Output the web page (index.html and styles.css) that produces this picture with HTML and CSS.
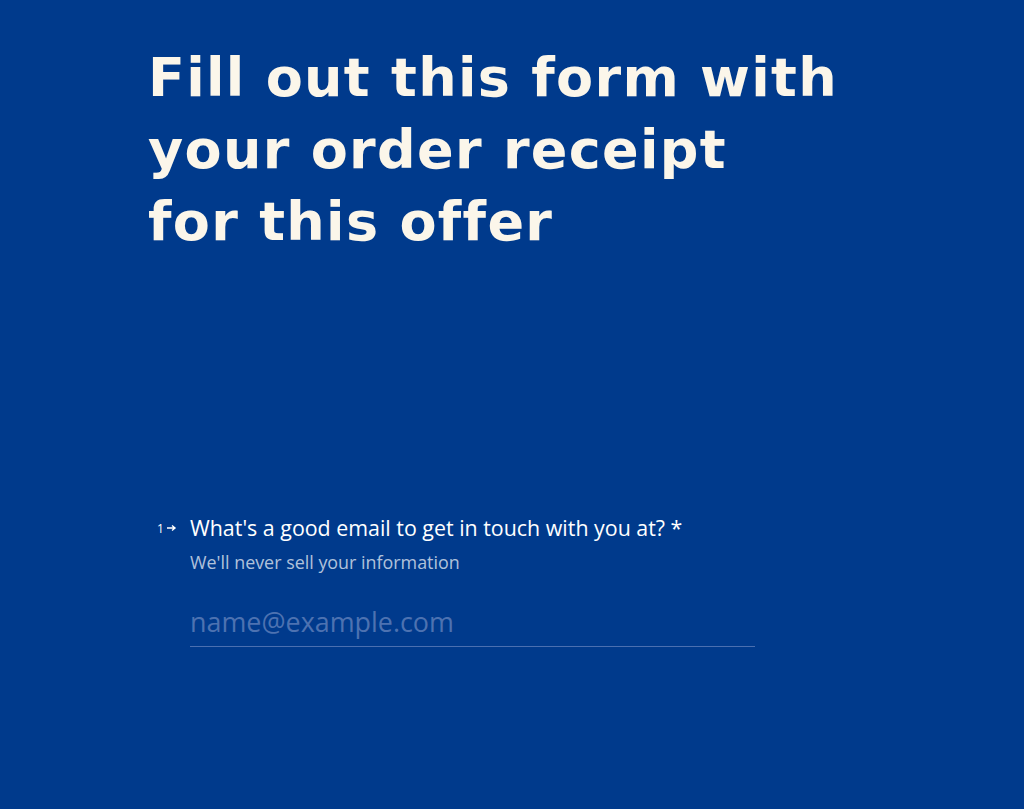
FILE: index.html
```html
<!DOCTYPE html>
<html lang="en">
<head>
<meta charset="utf-8">
<title>Form</title>
<link rel="stylesheet" href="styles.css">
</head>
<body>
<main class="page">
  <h1 class="title">Fill out this form with<br>your order receipt<br>for this offer</h1>
  <section class="question">
    <div class="num">1<svg class="arrow" width="10" height="8" viewBox="0 0 10 8"><path d="M0 4h7M5 1.5L8 4 5 6.5" fill="none" stroke="#fff" stroke-width="1.4"/></svg></div>
    <div class="body">
      <div class="label">What's a good email to get in touch with you at? *</div>
      <div class="hint">We'll never sell your information</div>
      <input class="field" type="text" placeholder="name@example.com">
    </div>
  </section>
</main>
</body>
</html>
```
FILE: styles.css
```css
html, body { margin: 0; padding: 0; }
body {
  background: #003a8c;
  width: 1024px;
  height: 809px;
  overflow: hidden;
  font-family: "Open Sans", sans-serif;
}
.page { padding: 42px 0 0 148px; }
.title {
  margin: 0;
  font-family: "DejaVu Sans", sans-serif;
  font-weight: bold;
  font-size: 54px;
  line-height: 72px;
  color: #fbf6ea;
  letter-spacing: 1.3px;
}
.question {
  display: flex;
  margin-top: 255px;
  margin-left: 9px;
}
.num {
  width: 33px;
  display: flex;
  align-items: center;
  gap: 3px;
  height: 30px;
  font-size: 12px;
  color: #fff;
}
.label {
  font-size: 21.4px;
  line-height: 30px;
  color: #fff;
}
.hint {
  margin-top: 7px;
  font-size: 17.9px;
  line-height: 24px;
  color: rgba(255,255,255,0.7);
}
.field {
  display: block;
  margin-top: 30px;
  width: 565px;
  box-sizing: border-box;
  border: 0;
  border-bottom: 1px solid #4a6fb0;
  background: transparent;
  padding: 0 0 6px 0;
  font-family: "Open Sans", sans-serif;
  font-size: 26.9px;
  line-height: 36px;
  color: #fff;
  outline: none;
}
.field::placeholder { color: #4d72b1; }
```
